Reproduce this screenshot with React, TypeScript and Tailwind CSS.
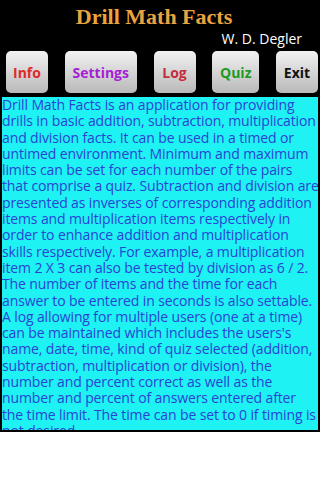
const info =
  "Drill Math Facts is an application for providing drills in basic addition, subtraction, multiplication and division facts. It can be used in a timed or untimed environment. Minimum and maximum limits can be set for each number of the pairs that comprise a quiz. Subtraction and division are presented as inverses of corresponding addition items and multiplication items respectively in order to enhance addition and multiplication skills respectively. For example, a multiplication item 2 X 3 can also be tested by division as 6 / 2. The number of items and the time for each answer to be entered in seconds is also settable. A log allowing for multiple users (one at a time) can be maintained which includes the users's name, date, time, kind of quiz selected (addition, subtraction, multiplication or division), the number and percent correct as well as the number and percent of answers entered after the time limit. The time can be set to 0 if timing is not desired.";

const buttons = [
  { label: "Info", w: "w-[42px]", color: "text-[#e02a2a]" },
  { label: "Settings", w: "w-[72px]", color: "text-[#a61ed6]" },
  { label: "Log", w: "w-[42px]", color: "text-[#c42f3c]" },
  { label: "Quiz", w: "w-[47px]", color: "text-[#1f9a1f]" },
  { label: "Exit", w: "w-[42px]", color: "text-[#111111]" },
];

export default function App() {
  return (
    <div className="w-[320px] h-[480px] bg-white flex flex-col overflow-hidden">
      <div className="bg-black h-[97px] flex flex-col shrink-0">
        <div
          className="h-[30px] flex items-center justify-center text-[22px] font-bold text-[#e9a43f] leading-none pt-[3px] pr-[12px]"
          style={{ fontFamily: '"Liberation Serif", serif' }}
        >
          Drill Math Facts
        </div>
        <div
          className="h-[18px] flex items-center justify-end pr-[18px] text-[14px] text-white leading-none"
          style={{ fontFamily: '"Open Sans", sans-serif' }}
        >
          W. D. Degler
        </div>
        <div className="flex justify-between pl-[6px] pr-[2px] pt-[3px]">
          {buttons.map((b) => (
            <button
              key={b.label}
              className={`${b.w} ${b.color} h-[42px] rounded-[5px] bg-gradient-to-b from-[#f2f2f2] to-[#b9b9b9] text-[14px] font-bold flex items-center justify-center`}
              style={{ fontFamily: '"Open Sans", sans-serif' }}
            >
              {b.label}
            </button>
          ))}
        </div>
      </div>
      <div className="h-[335px] shrink-0 bg-black px-[2px] pb-[2px]">
        <div className="h-full bg-[#1ef2f2] overflow-hidden">
          <p
            className="w-[318px] text-[14px] leading-[16.3px] tracking-[-0.12px] text-[#2a43d6]"
            style={{ fontFamily: '"Open Sans", sans-serif' }}
          >
            {info}
          </p>
        </div>
      </div>
    </div>
  );
}
